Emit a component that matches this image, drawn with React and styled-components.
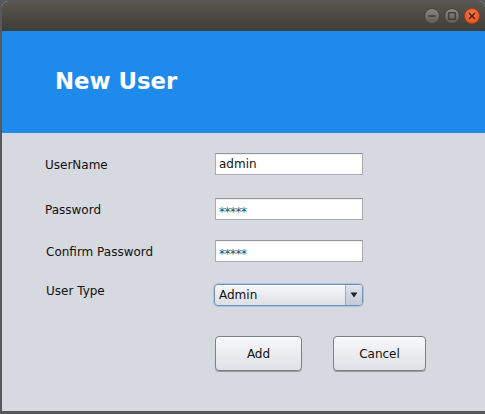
import React from 'react'
import styled, { createGlobalStyle } from 'styled-components'

const GlobalStyle = createGlobalStyle`
    html, body {
        margin: 0;
        padding: 0;
        background: #56585a;
        font-family: 'DejaVu Sans', 'Liberation Sans', sans-serif;
    }
    body {
        width: 485px;
        height: 414px;
        overflow: hidden;
    }
`

const Window = styled.div`
    margin: 1px 0 0 2px;
    width: 483px;
    height: 410px;
    border-radius: 6px 6px 0 0;
    overflow: hidden;
    display: flex;
    flex-direction: column;
    background: #d6d9df;
`

const TitleBar = styled.div`
    height: 30px;
    flex: none;
    display: flex;
    align-items: center;
    justify-content: flex-end;
    gap: 4px;
    padding-right: 5px;
    background: linear-gradient(#5a5751, #3f3d39);
`

const WinButton = styled.div`
    width: 16px;
    height: 16px;
    border-radius: 50%;
    display: flex;
    align-items: center;
    justify-content: center;
    box-sizing: border-box;
    border: 1px solid ${(p) => (p.$close ? '#b53c12' : '#44423e')};
    background: ${(p) =>
        p.$close ? 'radial-gradient(circle at 50% 35%, #f7784a, #e4501c)' : 'linear-gradient(#8a8782, #5f5d58)'};
`

const Header = styled.div`
    height: 102px;
    flex: none;
    display: flex;
    align-items: center;
    padding-left: 53px;
    padding-bottom: 2px;
    box-sizing: border-box;
    background: #1e8aeb;
`

const Title = styled.h1`
    margin: 0;
    font-size: 22.8px;
    font-weight: bold;
    color: #ffffff;
`

const Form = styled.div`
    display: grid;
    grid-template-columns: 170px 150px;
    padding: 20px 0 0 43px;
`

const Row = styled.div`
    display: contents;
`

const Label = styled.div`
    font-size: 12px;
    color: #111;
    display: flex;
    align-items: center;
    margin-top: ${(p) => p.$top}px;
    padding-top: ${(p) => (p.$lift ? 0 : 2)}px;
    padding-bottom: ${(p) => p.$lift || 0}px;
    padding-left: ${(p) => p.$indent || 0}px;
`

const Field = styled.div`
    width: 148px;
    height: 22px;
    box-sizing: border-box;
    margin-top: ${(p) => p.$top}px;
    border: 1px solid #a9abae;
    border-top-color: #95979a;
    background: #ffffff;
    box-shadow: inset 0 1px 0 #eceef0;
    font-size: 12px;
    color: ${(p) => (p.$secret ? '#14566a' : '#111')};
    display: flex;
    align-items: center;
    padding: ${(p) => (p.$secret ? '5px 0 0 3px' : '0 0 0 3px')};
    letter-spacing: ${(p) => (p.$secret ? '-0.5px' : '0')};
`

const Combo = styled.div`
    width: 149px;
    height: 22px;
    box-sizing: border-box;
    margin-top: ${(p) => p.$top}px;
    margin-left: -1px;
    border: 1px solid #6f93bb;
    border-radius: 4px;
    box-shadow: 0 0 0 1px #a9c3de, inset 0 1px 0 #ffffff;
    background: linear-gradient(#f6f7f9, #dcdfe5);
    display: flex;
    overflow: hidden;
`

const ComboText = styled.div`
    flex: 1;
    font-size: 12px;
    color: #111;
    display: flex;
    align-items: center;
    padding-left: 4px;
`

const ComboArrow = styled.div`
    width: 16px;
    flex: none;
    border-left: 1px solid #a3aab6;
    background: linear-gradient(#dfe3ea, #c3cad6);
    display: flex;
    align-items: center;
    justify-content: center;
`

const Actions = styled.div`
    grid-column: 2 / 3;
    display: flex;
    gap: 31px;
    margin-top: 30px;
`

const Button = styled.button`
    width: ${(p) => p.$width}px;
    height: 35px;
    flex: none;
    border: 1px solid #7d7f83;
    border-radius: 4px;
    background: linear-gradient(#f7f8fa, #dfe1e6);
    box-shadow: 0 1px 0 #9a9ca0, inset 0 1px 0 #ffffff;
    font-family: 'DejaVu Sans', 'Liberation Sans', sans-serif;
    font-size: 12px;
    color: #111;
    padding: 0;
`

const Minus = () => (
    <svg width="8" height="8" viewBox="0 0 8 8">
        <path d="M0.5 4h7" stroke="#3a3935" strokeWidth="1.4" />
    </svg>
)

const Square = () => (
    <svg width="8" height="8" viewBox="0 0 8 8">
        <rect x="0.8" y="0.8" width="6.4" height="6.4" fill="none" stroke="#3a3935" strokeWidth="1.3" />
    </svg>
)

const Cross = () => (
    <svg width="8" height="8" viewBox="0 0 8 8">
        <path d="M1 1l6 6M7 1l-6 6" stroke="#4a1a08" strokeWidth="1.4" />
    </svg>
)

const Caret = () => (
    <svg width="8" height="6" viewBox="0 0 8 6">
        <path d="M0.5 0.5h7L4 5.5z" fill="#222" />
    </svg>
)

const App = () => {
    return (
        <>
            <GlobalStyle />
            <Window>
                <TitleBar>
                    <WinButton>
                        <Minus />
                    </WinButton>
                    <WinButton>
                        <Square />
                    </WinButton>
                    <WinButton $close>
                        <Cross />
                    </WinButton>
                </TitleBar>

                <Header>
                    <Title>New User</Title>
                </Header>

                <Form>
                    <Row>
                        <Label $top={0}>UserName</Label>
                        <Field $top={0}>admin</Field>
                    </Row>
                    <Row>
                        <Label $top={23}>Password</Label>
                        <Field $top={23} $secret>*****</Field>
                    </Row>
                    <Row>
                        <Label $top={20} $indent={1}>Confirm Password</Label>
                        <Field $top={20} $secret>*****</Field>
                    </Row>
                    <Row>
                        <Label $top={22} $lift={8} $indent={1}>User Type</Label>
                        <Combo $top={22}>
                            <ComboText>Admin</ComboText>
                            <ComboArrow>
                                <Caret />
                            </ComboArrow>
                        </Combo>
                    </Row>
                    <Actions>
                        <Button $width={87}>Add</Button>
                        <Button $width={93}>Cancel</Button>
                    </Actions>
                </Form>
            </Window>
        </>
    )
}

export default App
